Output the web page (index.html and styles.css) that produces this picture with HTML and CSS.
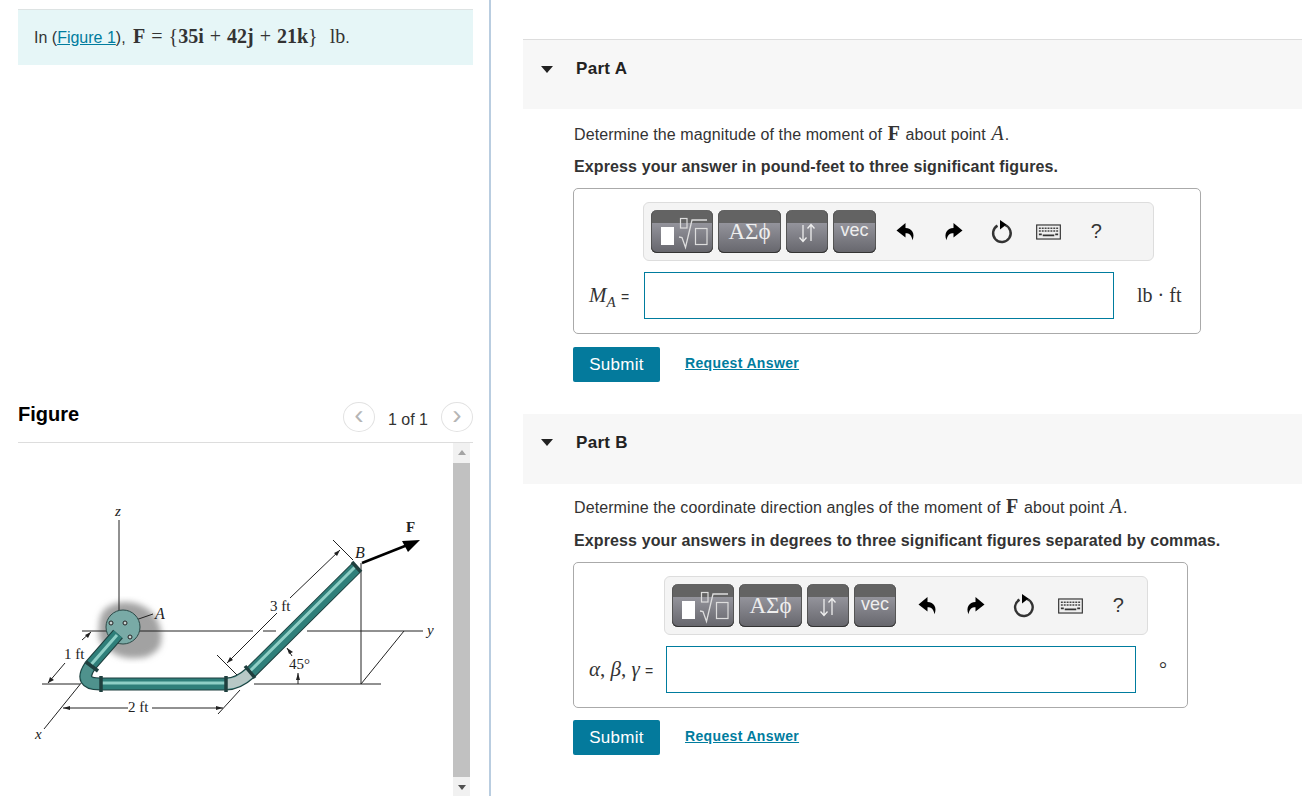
FILE: index.html
```html
<!DOCTYPE html>
<html>
  <head>
    <title>Moment about point A</title>
    <link rel="stylesheet" href="styles.css">
  </head>
  <body>
    <svg class="defs" width="0" height="0">
      <symbol id="i-undo" viewBox="0 0 20 20"><path d="M9.500 1 .5 8.500 9.500 15.500v-4.200c3.900 0 6 1.600 7 7 2.800-7.200-.5-12-7-12.400z"/></symbol>
      <symbol id="i-redo" viewBox="0 0 20 20"><path d="M10.500 1 19.500 8.500 10.500 15.500v-4.200c-3.900 0-6 1.600-7 7-2.800-7.200.5-12 7-12.400z"/></symbol>
      <symbol id="i-reset" viewBox="0 0 22 24"><path d="M14 5a8.800 8.800 0 1 1-7.500.6" fill="none" stroke="#333" stroke-width="2.400"/><path d="M9 0 15.500 4.500 9 9.500z"/></symbol>
      <symbol id="i-keys" viewBox="0 0 26 16"><rect x=".7" y=".7" width="24.600" height="14.600" fill="#eee" stroke="#333" stroke-width="1.200"/><path d="M3 4h20M3 7h20" stroke="#444" stroke-width="1.500" stroke-dasharray="2 1"/><path d="M3 10.500h3M7 11.500h12M20 10.500h3" stroke="#333" stroke-width="2"/></symbol>
      <symbol id="i-tpl" viewBox="0 0 62 43"><rect x="10" y="17" width="13" height="18" fill="#fff"/><rect x="29.500" y="8.500" width="6.500" height="9.500" fill="none" stroke="#ddd" stroke-width="1.200"/><path d="M28 27l3 .5 3.500 10L41 10h15" fill="none" stroke="#ddd" stroke-width="1.300"/><rect x="44.500" y="18.500" width="11.500" height="16" fill="none" stroke="#ddd" stroke-width="1.200"/></symbol>
      <symbol id="i-sort" viewBox="0 0 42 43"><path d="M17 15V31M13.500 27.500 17 31.500 20.500 27.500M25 31V15M21.500 18.500 25 14.500 28.500 18.500" fill="none" stroke="#eee" stroke-width="1.300"/></symbol>
    </svg>

    <div class="layout">
      <div class="left">
        <div class="intro">
          In (<a href="#">Figure 1</a>), <span class="math"><b>F</b> = {<b>35i</b> + <b>42j</b> + <b>21k</b>}&nbsp; lb</span>.
        </div>

        <div class="figure-head">
          <h2>Figure</h2>
          <div class="pager">
            <span class="pager-btn">&lsaquo;</span>
            <span class="pager-text">1 of 1</span>
            <span class="pager-btn">&rsaquo;</span>
          </div>
        </div>

        <div class="figure-row">
          <svg class="figure" viewBox="18 443 435 353" width="435" height="353">
            <defs>
              <filter id="blur"><feGaussianBlur stdDeviation="3"/></filter>
            </defs>

            <!-- wall shadow and flange -->
            <path d="M104 610q14-12 34-6 16 6 21 20 5 14 0 24-8 10-22 10-16 2-28-8-12-6-10-22 0-12 5-18z" fill="#a2a2a2" filter="url(#blur)"/>
            <g class="thin">
              <path d="M119 520V632"/>
              <path d="M82 631H253M263 631H276M307 631H423"/>
              <path d="M42 684H80M254 684H381"/>
              <path d="M361 563V684L404 631"/>
              <path d="M82 682 44 729"/>
              <path d="M48 683 65 663M82 640 91 632"/>
              <path d="M63 708H128M152 708H223M240 690 218 714"/>
              <path d="M227 663 277 613M290 598 340 550M333 540 353 560M217 655 237 675"/>
              <path d="M153 614 127 623"/>
              <path d="M287 648 292 656M298 673V684"/>
            </g>
            <circle cx="123" cy="627" r="17" fill="#79aaa6" stroke="#2c4a48"/>
            <g fill="#c8d4d2" stroke="#222">
              <circle cx="111" cy="623" r="2"/>
              <circle cx="125" cy="623" r="2"/>
              <circle cx="130" cy="637" r="2"/>
            </g>

            <!-- pipe -->
            <g fill="none">
              <path stroke="#1f3f3e" stroke-width="13" d="M118 634 L90 666 Q78 684 100 684 H226 Q238 684 250 673 L356 568"/>
              <path stroke="#2f7f7a" stroke-width="11" d="M118 634 L90 666 Q78 684 100 684 H226 Q238 684 250 673 L356 568"/>
              <path stroke="#8fcfc6" stroke-width="3" d="M117 635 L89 667 Q79 683 100 683 H226 Q238 683 249 672 L355 567"/>
              <path d="M226 684Q238 684 250 673" stroke="#b8c8c6" stroke-width="10"/>
              <path d="M90 666Q78 684 100 684" stroke="#4f928d" stroke-width="10"/>
            </g>
            <g class="collars">
              <path d="M101 676V692M226 676V692M245 666 255 678M86 662 98 671M352 562 361 572"/>
            </g>

            <!-- force -->
            <path d="M362 563 410 544" stroke="#000" stroke-width="2.500"/>
            <path d="M420 540 402 541 408 552z" fill="#000"/>

            <!-- dimension arrow heads -->
            <g fill="#222">
              <path d="M63 708 70 706V710zM223 708 216 706V710z"/>
              <path d="M48 683 50 677 54 680zM91 632 85 635 88 638z"/>
              <path d="M227 663 233 660 230 657zM340 550 334 553 337 556z"/>
              <path d="M287 648 293 652 289 654zM298 673 296 680H300z"/>
            </g>

            <g class="fig-label">
              <text x="115" y="516" font-style="italic">z</text>
              <text class="big" x="155" y="619" font-style="italic">A</text>
              <text class="big" x="355" y="558" font-style="italic">B</text>
              <text x="406" y="532" font-weight="bold">F</text>
              <text x="427" y="635" font-style="italic">y</text>
              <text x="35" y="739" font-style="italic">x</text>
              <text x="64" y="659">1 ft</text>
              <text x="128" y="712">2 ft</text>
              <text x="270" y="611">3 ft</text>
              <text x="289" y="669">45°</text>
            </g>
          </svg>
          <div class="scrollbar">
            <span class="arrow-up"></span>
            <div class="thumb"></div>
            <span class="arrow-down"></span>
          </div>
        </div>
      </div>

      <div class="right">
        <section class="part part-a">
          <div class="part-head"><span class="caret"></span><h3>Part A</h3></div>
          <div class="part-body">
            <p>Determine the magnitude of the moment of <b class="math">F</b> about point <i class="math">A</i>.</p>
            <p class="strong">Express your answer in pound-feet to three significant figures.</p>
            <div class="answer">
              <div class="toolbar">
                <span class="tbtn tbtn-tpl"><svg width="62" height="43"><use href="#i-tpl"/></svg></span>
                <span class="tbtn tbtn-greek">ΑΣϕ</span>
                <span class="tbtn tbtn-sm"><svg width="42" height="43"><use href="#i-sort"/></svg></span>
                <span class="tbtn tbtn-vec">vec</span>
                <span class="tools">
                  <span class="tool"><svg width="20" height="20"><use href="#i-undo"/></svg></span>
                  <span class="tool"><svg width="20" height="20"><use href="#i-redo"/></svg></span>
                  <span class="tool tool-reset"><svg width="22" height="24"><use href="#i-reset"/></svg></span>
                  <span class="tool"><svg width="25" height="16"><use href="#i-keys"/></svg></span>
                  <span class="tool help">?</span>
                </span>
              </div>
              <div class="answer-row">
                <span class="label math"><i>M<sub>A</sub></i> <span class="eq">=</span></span>
                <span class="field"></span>
                <span class="unit math">lb · ft</span>
              </div>
            </div>
            <div class="actions">
              <button>Submit</button>
              <a href="#">Request Answer</a>
            </div>
          </div>
        </section>

        <section class="part part-b">
          <div class="part-head"><span class="caret"></span><h3>Part B</h3></div>
          <div class="part-body">
            <p>Determine the coordinate direction angles of the moment of <b class="math">F</b> about point <i class="math">A</i>.</p>
            <p class="strong">Express your answers in degrees to three significant figures separated by commas.</p>
            <div class="answer">
              <div class="toolbar">
                <span class="tbtn tbtn-tpl"><svg width="62" height="43"><use href="#i-tpl"/></svg></span>
                <span class="tbtn tbtn-greek">ΑΣϕ</span>
                <span class="tbtn tbtn-sm"><svg width="42" height="43"><use href="#i-sort"/></svg></span>
                <span class="tbtn tbtn-vec">vec</span>
                <span class="tools">
                  <span class="tool"><svg width="20" height="20"><use href="#i-undo"/></svg></span>
                  <span class="tool"><svg width="20" height="20"><use href="#i-redo"/></svg></span>
                  <span class="tool tool-reset"><svg width="22" height="24"><use href="#i-reset"/></svg></span>
                  <span class="tool"><svg width="25" height="16"><use href="#i-keys"/></svg></span>
                  <span class="tool help">?</span>
                </span>
              </div>
              <div class="answer-row">
                <span class="label math"><i>α</i>, <i>β</i>, <i>γ</i> <span class="eq">=</span></span>
                <span class="field"></span>
                <span class="unit math">°</span>
              </div>
            </div>
            <div class="actions">
              <button>Submit</button>
              <a href="#">Request Answer</a>
            </div>
          </div>
        </section>
      </div>
    </div>
  </body>
</html>
```

FILE: styles.css
```css
body {
  margin: 0;
  font-family: "Liberation Sans", Arial, sans-serif;
  font-size: 16px;
  color: #333;
  background: #fff;
  overflow: hidden;
}

a {
  color: #007c9e;
}

.defs {
  position: absolute;
}

.math {
  font-family: "Liberation Serif", serif;
}

.layout {
  display: flex;
  height: 796px;
}

/* left column */
.left {
  box-sizing: border-box;
  width: 491px;
  flex: none;
  padding: 9px 16px 0 18px;
  border-right: 2px solid #b9cde0;
}

.intro {
  box-sizing: border-box;
  height: 56px;
  padding: 17px 16px 0;
  border-top: 1px solid #dde3e3;
  background: #e6f6f7;
}

.intro .math {
  margin-left: 3px;
  font-size: 20px;
  line-height: 18px;
  word-spacing: 1px;
}

.figure-head {
  display: flex;
  justify-content: space-between;
  align-items: center;
  height: 47px;
  margin-top: 330px;
  border-bottom: 1px solid #ddd;
}

.figure-head h2 {
  margin: 0 0 9px;
  font-size: 20px;
  color: #000;
}

.pager {
  display: flex;
  align-items: center;
  gap: 13px;
  margin-bottom: 4px;
}

.pager-btn {
  box-sizing: border-box;
  display: flex;
  align-items: center;
  justify-content: center;
  width: 32px;
  height: 30px;
  padding-bottom: 4px;
  border: 1px solid #e2e2e2;
  border-radius: 50%;
  font-size: 28px;
  color: #b5b5b5;
}

.pager-text {
  padding-top: 6px;
}

.figure-row {
  display: flex;
  height: 353px;
}

.figure {
  flex: none;
}

.thin {
  fill: none;
  stroke: #222;
  stroke-width: 1;
}

.collars {
  fill: none;
  stroke: #1f3f3e;
  stroke-width: 3.500;
}

.fig-label {
  font-family: "Liberation Serif", serif;
  font-size: 15px;
  fill: #222;
}

.fig-label .big {
  font-size: 16px;
}

.scrollbar {
  display: flex;
  flex-direction: column;
  align-items: center;
  justify-content: space-between;
  width: 17px;
  background: #f1f1f1;
}

.thumb {
  flex: 1;
  width: 100%;
  margin: 3px 0;
  background: #c1c1c1;
}

.arrow-up,
.arrow-down {
  width: 0;
  height: 0;
  margin: 7px 0 5px;
  border-left: 4.500px solid transparent;
  border-right: 4.500px solid transparent;
}

.arrow-up {
  border-bottom: 5px solid #a3a3a3;
}

.arrow-down {
  margin: 5px 0 6px;
  border-top: 5px solid #505050;
}

/* right column */
.right {
  flex: 1;
  min-width: 0;
  padding: 39px 0 0 32px;
}

.part-head {
  display: flex;
  align-items: center;
  height: 70px;
  background: #f7f7f7;
}

.part-a .part-head {
  border-top: 1px solid #ddd;
  box-sizing: border-box;
  height: 70px;
}

.part-head h3 {
  margin: 0 0 11px 1px;
  font-size: 17px;
  letter-spacing: .3px;
  color: #222;
}

.part-b .part-head h3 {
  margin-bottom: 13px;
}

.caret {
  width: 0;
  height: 0;
  margin: 0 22px 11px 18px;
  border-left: 6.500px solid transparent;
  border-right: 6.500px solid transparent;
  border-top: 7px solid #222;
}

.part-b .caret {
  margin-bottom: 14px;
}

.part-body {
  padding: 14px 0 32px 50px;
}

.part-body p {
  margin: 0 0 11px 1px;
  padding-top: 1px;
  line-height: 20px;
  letter-spacing: .1px;
}

.part-body p .math {
  margin: 0 1px;
  font-size: 20px;
  line-height: 18px;
}

.part-b .part-body {
  padding-top: 12px;
}

.part-b .part-body p {
  margin-bottom: 12px;
}

.strong {
  font-weight: bold;
}

.part-body p.strong {
  margin-bottom: 11px;
  letter-spacing: .12px;
}

.answer {
  box-sizing: border-box;
  height: 146px;
  padding: 13px 0 0;
  border: 1px solid #aaa;
  border-radius: 5px;
}

.part-a .answer {
  width: 628px;
}

.part-b .answer {
  width: 615px;
}

.part-a .toolbar {
  width: 511px;
  margin-left: 69px;
}

.part-b .toolbar {
  width: 484px;
  margin-left: 90px;
}

.toolbar {
  box-sizing: border-box;
  display: flex;
  align-items: center;
  gap: 5px;
  height: 59px;
  padding: 0 7px;
  border: 1px solid #ddd;
  border-radius: 6px;
  background: #f4f4f4;
}

.tbtn {
  box-sizing: border-box;
  display: flex;
  align-items: center;
  justify-content: center;
  height: 43px;
  flex: none;
  overflow: hidden;
  border-radius: 6px;
  box-shadow: inset 0 -1px 0 #333, inset 1px 0 0 #555, inset -1px 0 0 #555;
  background: linear-gradient(#636363 0, #636363 30%, #93939b 31%, #66666c 100%);
  color: #eee;
}

.tbtn-tpl {
  width: 62px;
}

.tbtn-greek {
  width: 63px;
  font-family: "Liberation Serif", serif;
  font-size: 23px;
}

.tbtn-sm {
  width: 42px;
}

.tbtn-vec {
  width: 43px;
  padding-bottom: 2px;
  font-size: 18px;
}

.part-b .tbtn-vec {
  width: 42px;
}

.tools {
  display: flex;
  align-items: center;
  margin-left: 1px;
}

.part-b .tools {
  margin-left: 3px;
}

.tool {
  display: flex;
  align-items: center;
  justify-content: center;
  width: 47.500px;
  height: 26px;
  color: #333;
}

.tool-reset {
  padding-left: 2px;
  box-sizing: border-box;
}

.help {
  padding-left: 1px;
  box-sizing: border-box;
  font-size: 20px;
}

.answer-row {
  display: flex;
  align-items: center;
  margin-top: 11px;
}

.label {
  box-sizing: border-box;
  padding-left: 15px;
  font-size: 21px;
  white-space: nowrap;
}

.label sub {
  font-size: 15px;
  line-height: 0;
}

.eq {
  font-family: "Liberation Sans", sans-serif;
  font-size: 14px;
}

.part-a .label {
  width: 70px;
}

.part-b .label {
  width: 92px;
}

.field {
  box-sizing: border-box;
  width: 470px;
  height: 47px;
  flex: none;
  border: 1px solid #007c9e;
  background: #fff;
}

.unit {
  flex: 1;
  padding-left: 23px;
  font-size: 20px;
}

.actions {
  display: flex;
  align-items: center;
  gap: 25px;
  margin-top: 13px;
}

.part-b .actions {
  margin-top: 12px;
}

.actions button {
  width: 87px;
  height: 35px;
  padding: 0;
  border: none;
  border-radius: 2px;
  background: #047a9c;
  color: #fff;
  font: 17px "Liberation Sans", Arial, sans-serif;
  letter-spacing: .3px;
}

.actions a {
  padding-bottom: 3px;
  font-size: 14px;
  font-weight: bold;
  letter-spacing: .35px;
}
```
